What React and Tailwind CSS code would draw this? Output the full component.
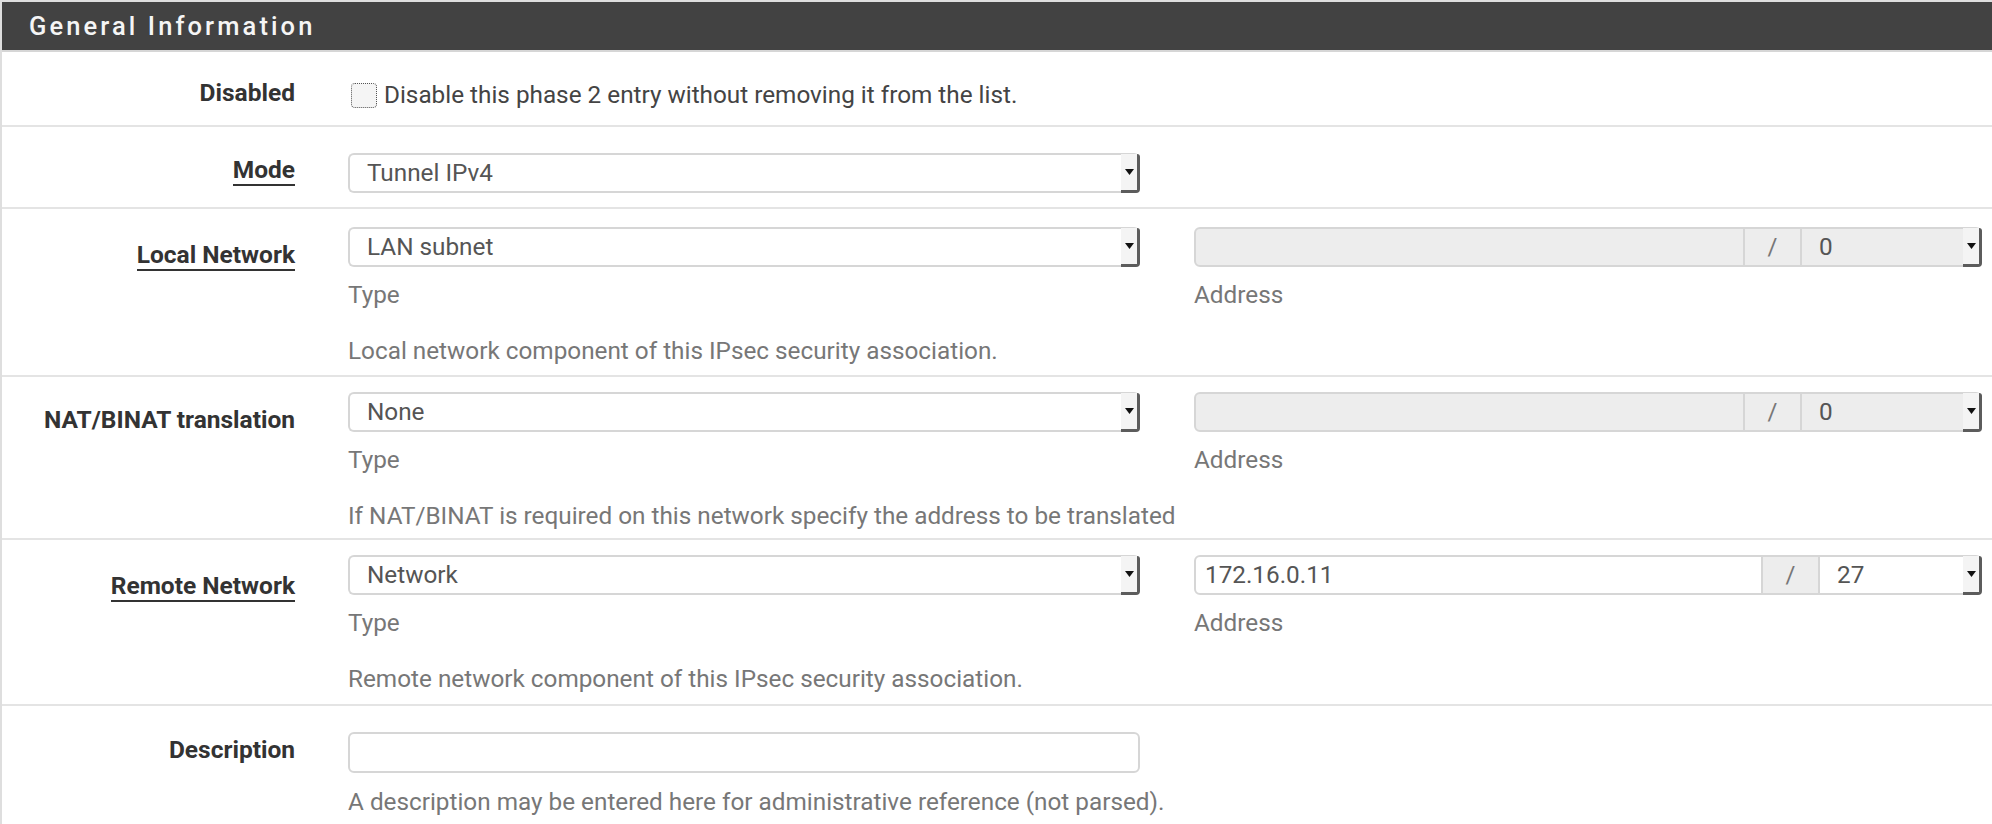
import React from 'react';

function Arrow() {
    return (
        <svg width="9" height="6" viewBox="0 0 9 6">
            <polygon points="0,0 9,0 4.5,6" fill="#111" />
        </svg>
    );
}

// old-style select with the little shaded arrow button on the right
function Select({ value, className = '', disabled = false, rounded = 'rounded-[6px]' }) {
    return (
        <div className={`flex h-[40px] items-stretch border-2 border-r-0 border-[#d6d6d6] ${rounded} ${disabled ? 'bg-[#ededed]' : 'bg-white'} ${className}`}>
            <span className="flex-1 self-center pl-[17px] text-[24.3px] leading-[30px] text-[#555]">{value}</span>
            <div className="-mb-[2px] -mt-[1px] flex w-[19px] items-center justify-center rounded-br-[4px] rounded-tr-[3px] border-b-[3px] border-r-[3px] border-[#5c5c5c] bg-[#f4f4f4] pl-[1px]">
                <Arrow />
            </div>
        </div>
    );
}

function AddressGroup({ value = '', mask, disabled = false, maskWidth }) {
    return (
        <div className="flex h-[40px] w-[788px]">
            <div className={`flex flex-1 items-center rounded-l-[6px] border-2 border-[#d6d6d6] pl-[9px] text-[24.3px] text-[#555] ${disabled ? 'bg-[#ededed]' : 'bg-white'}`}>
                {value}
            </div>
            <div className="flex w-[55px] items-center justify-center border-y-2 border-[#d6d6d6] bg-[#ededed] text-[24px] text-[#777]">/</div>
            <Select value={mask} disabled={disabled} rounded="rounded-r-[6px]" className={`${maskWidth} border-l-2`} />
        </div>
    );
}

function Label({ children, underline = false, pt }) {
    return (
        <div className={`w-[346px] shrink-0 pr-[53px] text-right text-[24.5px] font-bold leading-[30px] text-[#333] ${pt}`}>
            {underline ? <span className="border-b-2 border-[#333]">{children}</span> : children}
        </div>
    );
}

function NetworkRow({ label, type, address, mask, disabled, maskWidth, help, height, labelPt }) {
    return (
        <div className={`flex border-b-2 border-[#e4e4e4] ${height}`}>
            <Label underline={label !== 'NAT/BINAT translation'} pt={labelPt}>{label}</Label>
            <div className={`flex-1 ${label === 'Local Network' ? 'pt-[18px]' : 'pt-[15px]'}`}>
                <div className="grid grid-cols-[792px_788px] gap-x-[54px]">
                    <Select value={type} />
                    <AddressGroup value={address} mask={mask} disabled={disabled} maskWidth={maskWidth} />
                    <div className="mt-[13px] text-[24.3px] leading-[30px] text-[#777]">Type</div>
                    <div className="mt-[13px] text-[24.3px] leading-[30px] text-[#777]">Address</div>
                </div>
                <div className="mt-[26px] text-[24.3px] leading-[30px] text-[#777]">{help}</div>
            </div>
        </div>
    );
}

export default function App() {
    return (
        <div className="h-[824px] w-[1992px] overflow-hidden border-l-2 border-t-2 border-[#dedede] bg-white font-['Roboto',sans-serif]">
            {/* Panel heading */}
            <div className="flex h-[50px] items-center border-b-2 border-[#d6d6d6] bg-[#424242] pl-[27px]">
                <span className="text-[25.5px] font-medium tracking-[3.1px] text-[#f5f5f5]">General Information</span>
            </div>

            {/* Disabled */}
            <div className="flex h-[75px] border-b-2 border-[#e4e4e4]">
                <Label pt="pt-[26px]">Disabled</Label>
                <div className="flex h-[58px] items-center gap-[7px] pl-[3px] pt-[28px]">
                    <div className="h-[25px] w-[26px] rounded-[4px] border-[1.5px] border-dotted border-[#555] bg-[#f5f5f5]" />
                    <span className="text-[24.3px] leading-[30px] text-[#444]">Disable this phase 2 entry without removing it from the list.</span>
                </div>
            </div>

            {/* Mode */}
            <div className="flex h-[82px] border-b-2 border-[#e4e4e4]">
                <Label underline pt="pt-[28px]">Mode</Label>
                <div className="pt-[26px]">
                    <Select value="Tunnel IPv4" className="w-[792px]" />
                </div>
            </div>

            <NetworkRow
                label="Local Network"
                type="LAN subnet"
                mask="0"
                disabled
                maskWidth="w-[182px]"
                help="Local network component of this IPsec security association."
                height="h-[168px]"
                labelPt="pt-[31px]"
            />
            <NetworkRow
                label="NAT/BINAT translation"
                type="None"
                mask="0"
                disabled
                maskWidth="w-[182px]"
                help="If NAT/BINAT is required on this network specify the address to be translated"
                height="h-[163px]"
                labelPt="pt-[28px]"
            />
            <NetworkRow
                label="Remote Network"
                type="Network"
                address="172.16.0.11"
                mask="27"
                maskWidth="w-[164px]"
                help="Remote network component of this IPsec security association."
                height="h-[166px]"
                labelPt="pt-[31px]"
            />

            {/* Description */}
            <div className="flex">
                <Label pt="pt-[29px]">Description</Label>
                <div className="pt-[26px]">
                    <div className="h-[41px] w-[792px] rounded-[6px] border-2 border-[#d6d6d6] bg-white" />
                    <div className="mt-[14px] text-[24.3px] leading-[30px] text-[#777]">A description may be entered here for administrative reference (not parsed).</div>
                </div>
            </div>
        </div>
    );
}
